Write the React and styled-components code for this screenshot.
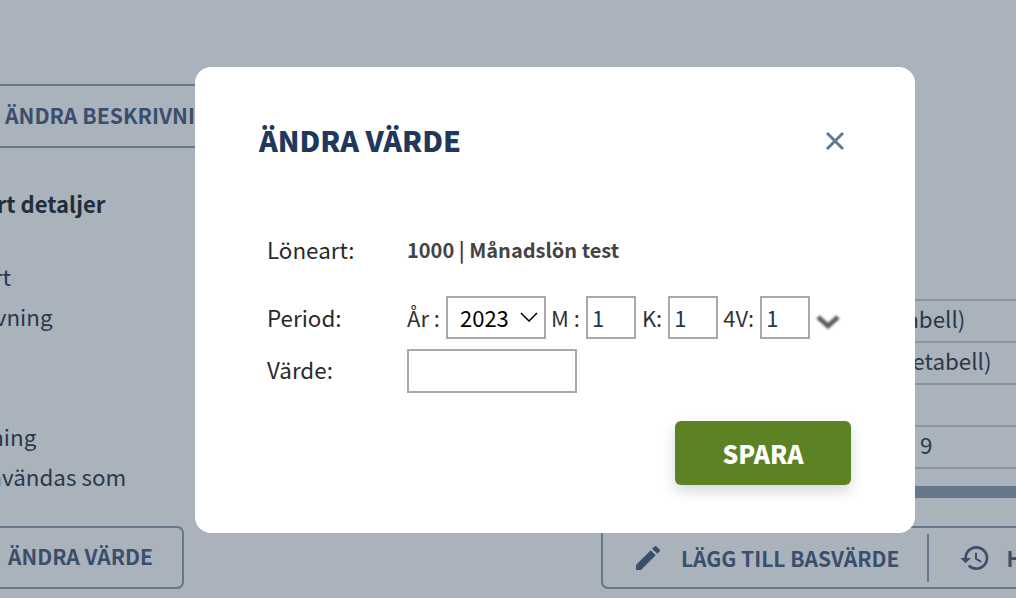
import styled, { createGlobalStyle } from "styled-components";
import { MdEdit, MdHistory } from "react-icons/md";

const GlobalStyle = createGlobalStyle`
  html, body {
    margin: 0;
    padding: 0;
    background: #aab2bc;
  }

  body {
    font-family: "Noto Sans CJK SC", "Noto Sans", sans-serif;
  }
`

const Page = styled.div`
  position: relative;
  width: 1016px;
  height: 598px;
  overflow: hidden;
  display: grid;
  grid-template-columns: 184px 480px;
  column-gap: 417px;
  background: #aab2bc;
`

const LeftColumn = styled.div`
  margin-left: -70px;
  padding-top: 84px;
  display: flex;
  flex-direction: column;
`

const RightColumn = styled.div`
  padding-top: 299px;
  display: flex;
  flex-direction: column;
`

const DescriptionButton = styled.div`
  box-sizing: border-box;
  width: 420px;
  height: 64px;
  display: flex;
  align-items: center;
  padding: 0 0 3px 75px;
  border-top: 2px solid #66778c;
  border-bottom: 2px solid #66778c;
  font-size: 21.2px;
  font-weight: 600;
  color: #3a4f6b;
  white-space: nowrap;
`

const SectionTitle = styled.h3`
  margin: 39px 0 37px 1px;
  font-size: 22px;
  line-height: 32px;
  font-weight: 700;
  color: #222d3c;
  white-space: nowrap;
`

const DetailRow = styled.div`
  height: 40px;
  line-height: 40px;
  font-size: 22.4px;
  color: #2b384a;
  white-space: nowrap;
`

const ValueButton = styled.div`
  box-sizing: border-box;
  height: 63px;
  margin-top: 30px;
  display: flex;
  align-items: center;
  padding: 0 0 3px 76px;
  border: 2px solid #66778c;
  border-radius: 7px;
  font-size: 21px;
  font-weight: 600;
  color: #3a4f6b;
  white-space: nowrap;
`

const Table = styled.div`
  border-bottom: 2px solid #8a94a1;
`

const TableRow = styled.div`
  box-sizing: border-box;
  height: 42px;
  line-height: 35px;
  padding-left: ${(props) => props.$indent}px;
  border-top: 2px solid #8a94a1;
  font-size: 22.4px;
  color: #2b384a;
  white-space: nowrap;
`

const ScrollBar = styled.div`
  height: 12px;
  margin-top: 17px;
  background: #66778c;
`

const ActionBar = styled.div`
  box-sizing: border-box;
  height: 63px;
  margin-top: 28px;
  display: flex;
  align-items: center;
  border: 2px solid #66778c;
  border-radius: 7px;
  color: #3a4f6b;
  font-size: 21px;
  font-weight: 600;
  white-space: nowrap;
`

const ActionItem = styled.div`
  display: flex;
  flex-shrink: 0;
  align-items: center;
  gap: ${(props) => props.$gap}px;
  padding-left: ${(props) => props.$left}px;

  svg {
    flex-shrink: 0;
  }
`

const ActionDivider = styled.div`
  flex-shrink: 0;
  width: 2px;
  height: 48px;
  margin-left: 28px;
  background: #66778c;
`

const Modal = styled.div`
  position: absolute;
  left: 195px;
  top: 67px;
  box-sizing: border-box;
  width: 720px;
  height: 466px;
  padding: 52px 64px 48px;
  background: #fff;
  border-radius: 16px;
  display: flex;
  flex-direction: column;
`

const ModalHeader = styled.div`
  display: flex;
  align-items: center;
  justify-content: space-between;
  height: 44px;
`

const ModalTitle = styled.h2`
  margin: 0;
  padding-bottom: 3px;
  font-size: 28.5px;
  font-weight: 900;
  color: #20385a;
`

const CloseButton = styled.button`
  width: 24px;
  height: 24px;
  padding: 0;
  margin-right: 4px;
  border: 0;
  background: none;
  display: flex;
  align-items: center;
  justify-content: center;
`

const FormGrid = styled.div`
  display: grid;
  grid-template-columns: 140px 1fr;
  margin: 64px 0 0 8px;
  font-size: 22px;
  color: #333;
`

const FormLabel = styled.div`
  display: flex;
  align-items: center;
  height: 44px;
  margin-top: ${(props) => props.$top || 0}px;
  font-size: 22.4px;
  color: #2a2a2a;
`

const LoneartValue = styled.div`
  display: flex;
  align-items: center;
  height: 44px;
  font-size: 20px;
  font-weight: 700;
  color: #444;
`

const PeriodRow = styled.div`
  display: flex;
  align-items: center;
  height: 44px;
  margin-top: 24px;
  white-space: nowrap;
`

const PeriodLabel = styled.span`
  margin: 0 ${(props) => props.$right}px 0 ${(props) => props.$left}px;
`

const YearSelect = styled.select`
  box-sizing: border-box;
  width: 100px;
  height: 43px;
  padding: 0 0 0 12px;
  border: 2px solid #a9a9a9;
  border-radius: 0;
  appearance: none;
  background: #fff url("data:image/svg+xml,%3Csvg xmlns='http://www.w3.org/2000/svg' width='18' height='10' viewBox='0 0 18 10'%3E%3Cpath d='M1 1l8 8 8-8' fill='none' stroke='%23000' stroke-width='1.5'/%3E%3C/svg%3E") no-repeat right 6px center;
  font: inherit;
  color: #000;
`

const SmallInput = styled.input`
  box-sizing: border-box;
  width: 50px;
  height: 43px;
  padding: 0 4px;
  border: 2px solid #a9a9a9;
  font: inherit;
  color: #20385a;
  outline: none;
`

const ValueInput = styled.input`
  box-sizing: border-box;
  width: 170px;
  height: 44px;
  margin-top: 10px;
  padding: 0 4px;
  border: 2px solid #a9a9a9;
  font: inherit;
  color: #20385a;
  outline: none;
  display: block;
`

const Chevron = styled.svg`
  width: 28px;
  height: 20px;
  margin-left: 4px;
  margin-top: 9px;
  filter: blur(1px);
`

const ModalFooter = styled.div`
  display: flex;
  justify-content: flex-end;
  margin-top: 28px;
`

const SaveButton = styled.button`
  width: 176px;
  height: 64px;
  padding: 0;
  border: 0;
  border-radius: 6px;
  background: #5c8224;
  box-shadow: 0 6px 14px rgba(32, 56, 90, 0.2);
  color: #fff;
  font: inherit;
  font-size: 24.7px;
  font-weight: 900;
`

const App = () => {
  return (
    <>
      <GlobalStyle />
      <Page>
        <LeftColumn>
          <DescriptionButton>ÄNDRA BESKRIVNING</DescriptionButton>
          <SectionTitle>Löneart detaljer</SectionTitle>
          <DetailRow>Löneart</DetailRow>
          <DetailRow>Beskrivning</DetailRow>
          <DetailRow>Typ</DetailRow>
          <DetailRow>Enhet</DetailRow>
          <DetailRow>Beräkning</DetailRow>
          <DetailRow>Kan användas som</DetailRow>
          <ValueButton>ÄNDRA VÄRDE</ValueButton>
        </LeftColumn>

        <RightColumn>
          <Table>
            <TableRow $indent={161}>Grundvärde (tabell)</TableRow>
            <TableRow $indent={129}>Grundvärde (löneetabell)</TableRow>
            <TableRow $indent={200} />
            <TableRow $indent={319}>9</TableRow>
          </Table>
          <ScrollBar />
          <ActionBar>
            <ActionItem $left={29} $gap={17}>
              <MdEdit size={32} />
              <span>LÄGG TILL BASVÄRDE</span>
            </ActionItem>
            <ActionDivider />
            <ActionItem $left={30} $gap={15}>
              <MdHistory size={32} />
              <span>HISTORIK</span>
            </ActionItem>
          </ActionBar>
        </RightColumn>

        <Modal>
          <ModalHeader>
            <ModalTitle>ÄNDRA VÄRDE</ModalTitle>
            <CloseButton aria-label="Stäng">
              <svg width="20" height="20" viewBox="0 0 20 20">
                <path d="M2 2l16 16M18 2L2 18" fill="none" stroke="#5f7a98" strokeWidth="3" />
              </svg>
            </CloseButton>
          </ModalHeader>

          <FormGrid>
            <FormLabel>Löneart:</FormLabel>
            <LoneartValue>1000 | Månadslön test</LoneartValue>

            <FormLabel $top={24}>Period:</FormLabel>
            <PeriodRow>
              <PeriodLabel $left={0} $right={6}>År :</PeriodLabel>
              <YearSelect defaultValue="2023">
                <option>2023</option>
              </YearSelect>
              <PeriodLabel $left={5} $right={6}>M :</PeriodLabel>
              <SmallInput defaultValue="1" />
              <PeriodLabel $left={6} $right={6}>K:</PeriodLabel>
              <SmallInput defaultValue="1" />
              <PeriodLabel $left={5} $right={6}>4V:</PeriodLabel>
              <SmallInput defaultValue="1" />
              <Chevron viewBox="0 0 28 20">
                <path d="M4 5l10 9 10-9" fill="none" stroke="#5f5f5f" strokeWidth="5" />
              </Chevron>
            </PeriodRow>

            <FormLabel $top={8}>Värde:</FormLabel>
            <ValueInput />
          </FormGrid>

          <ModalFooter>
            <SaveButton>SPARA</SaveButton>
          </ModalFooter>
        </Modal>
      </Page>
    </>
  );
};

export default App;
